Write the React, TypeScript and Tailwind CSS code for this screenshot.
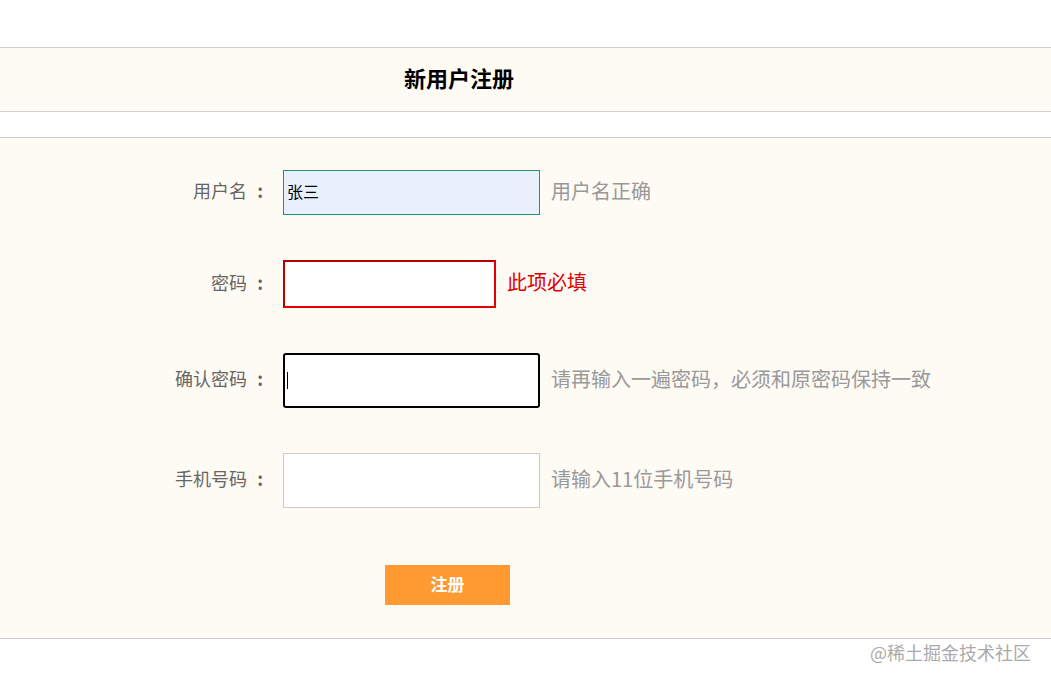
import React from 'react';

const font = { fontFamily: '"Noto Sans CJK SC", "Noto Sans", sans-serif' };

interface RowProps {
  label: string;
  children: React.ReactNode;
}

function Row({ label, children }: RowProps) {
  return (
    <div className="flex items-center">
      <label className="w-[265px] shrink-0 flex justify-end pb-[4px] text-[18px] text-[#666]">
        <span>{label}</span>
        <span className="inline-block w-[18px] pr-[2px] text-right font-bold">:</span>
      </label>
      <div className="ml-[18px] flex items-center">{children}</div>
    </div>
  );
}

export default function App() {
  return (
    <div className="relative w-[1051px] h-[684px] bg-white" style={font}>
      <div className="pt-[47px]">
        <div className="h-[65px] border-y border-[#d0d0d0] bg-[#fefaf4] flex items-center">
          <h1 className="w-[918px] pb-[4px] text-center text-[22px] font-bold text-black">新用户注册</h1>
        </div>
        <div className="h-[25px]" />
        <form className="border-y border-[#d0d0d0] bg-[#fefaf4] pt-[32px] pb-[32px] h-[502px]">
          <div className="flex flex-col gap-[45px]">
            <Row label="用户名">
              <input
                readOnly
                value="张三"
                className="w-[257px] h-[45px] border border-[#23916f] bg-[#e8f0fe] pl-[3px] pb-[3px] text-[16px] text-black outline-none"
              />
              <span className="ml-[11px] pb-[4px] text-[20px] text-[#999]">用户名正确</span>
            </Row>
            <Row label="密码">
              <input
                readOnly
                type="password"
                className="w-[213px] h-[48px] border-2 border-t-[#b80000] border-l-[#b80000] border-r-[#e80000] border-b-[#e80000] bg-white outline-none"
              />
              <span className="ml-[11px] pb-[4px] text-[20px] text-[#e00000]">此项必填</span>
            </Row>
            <Row label="确认密码">
              <div className="relative">
                <input
                  readOnly
                  type="password"
                  className="w-[257px] h-[55px] border-2 border-black rounded-[3px] bg-white outline-none"
                />
                <span className="absolute left-[4px] top-[19px] w-px h-[17px] bg-black" />
              </div>
              <span className="ml-[11px] pb-[4px] text-[20px] text-[#999]">请再输入一遍密码，必须和原密码保持一致</span>
            </Row>
            <Row label="手机号码">
              <input
                readOnly
                className="w-[257px] h-[55px] border border-[#ccc] bg-white outline-none"
              />
              <span className="ml-[11px] pb-[4px] text-[20px] text-[#999]">请输入11位手机号码</span>
            </Row>
          </div>
          <div className="mt-[57px] pl-[385px]">
            <button
              type="button"
              className="w-[125px] h-[40px] pb-[3px] bg-[#ff9a33] text-white text-[17px] font-bold"
            >
              注册
            </button>
          </div>
        </form>
      </div>
      <div className="absolute right-[20px] top-[639px] text-[18px] text-[#aaa]">@稀土掘金技术社区</div>
    </div>
  );
}
